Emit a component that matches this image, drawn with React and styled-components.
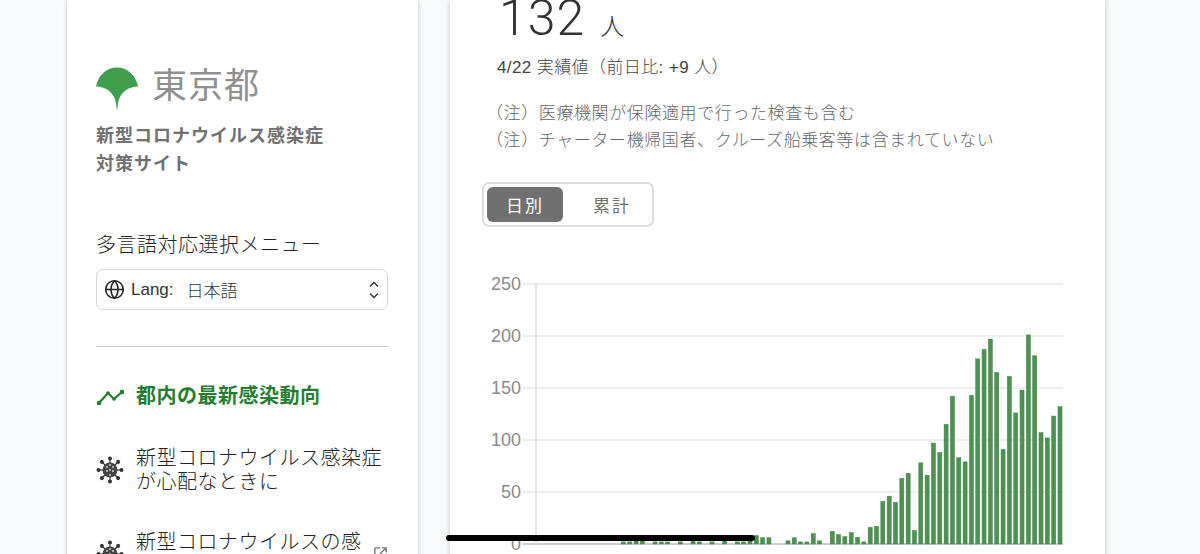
import React from 'react'
import styled, { createGlobalStyle } from 'styled-components'
import { Globe } from 'lucide-react'
import { MdOpenInNew } from 'react-icons/md'

// daily counts, newest first (last bar on the chart is index 0)
const DAILY = [
  132, 123, 102, 107, 181, 201, 148, 126, 161, 91, 165, 197, 187, 178, 143, 79, 83, 142, 115, 88, 97,
  66, 78, 13, 68, 63, 40, 46, 41, 17, 16, 2, 6.5, 11, 7, 9, 12, 0, 3, 10, 2, 2, 6, 3, 0, 0, 6, 6, 8,
  3, 2, 2, 0, 3, 0, 2, 0, 2, 3, 0, 2, 0, 2, 2, 2, 0, 3, 3, 2, 2,
]
const TICKS = [0, 50, 100, 150, 200, 250]
const yFor = v => 544 - v * 1.04

const Global = createGlobalStyle`
  html, body {
    margin: 0;
    padding: 0;
    background: #f8f9fa;
  }
  body {
    font-family: "Liberation Sans", "Noto Sans CJK JP", sans-serif;
  }
`

function App() {
  return (
    <Page>
      <Global />
      <Sidebar>
        <LogoRow>
          <svg width="44" height="44" viewBox="95 65 44 44">
            <path
              fill="#3f9e4b"
              d="M96 85.5C98 74 107 66.5 117 66.5S136 74 138 85.5C128 85.5 119.500 92 118 102L117.300 108.500H116.700L116 102C114.500 92 106 85.500 96 85.500Z"
            />
          </svg>
          <LogoText>東京都</LogoText>
        </LogoRow>
        <SiteTitle>
          新型コロナウイルス感染症
          <br />
          対策サイト
        </SiteTitle>
        <LangLabel>多言語対応選択メニュー</LangLabel>
        <LangSelect>
          <Globe size={21} strokeWidth={1.8} color="#222" />
          <LangPrefix>Lang:</LangPrefix>
          <LangValue>日本語</LangValue>
          <svg width="12" height="20" viewBox="0 0 12 20" fill="none" stroke="#333" strokeWidth="1.4">
            <path d="M2 6.500L6 2.500L10 6.500" />
            <path d="M2 13.500L6 17.500L10 13.500" />
          </svg>
        </LangSelect>
        <Divider />
        <NavList>
          <NavItem $active>
            <NavIcon>
              <TrendIcon />
            </NavIcon>
            <NavText $active>都内の最新感染動向</NavText>
          </NavItem>
          <NavItem>
            <NavIcon>
              <VirusIcon />
            </NavIcon>
            <NavText>
              新型コロナウイルス感染症
              <br />
              が心配なときに
            </NavText>
          </NavItem>
          <NavItem>
            <NavIcon>
              <VirusIcon />
            </NavIcon>
            <NavText>
              新型コロナウイルスの感
              <br />
              染症対策
            </NavText>
            <OutLink>
              <MdOpenInNew size={17} />
            </OutLink>
          </NavItem>
        </NavList>
      </Sidebar>
      <Main>
        <Count>
          132<Unit>人</Unit>
        </Count>
        <DateLine>4/22 実績値（前日比: +9 人）</DateLine>
        <Notes>
          <li>（注）医療機関が保険適用で行った検査も含む</li>
          <li>（注）チャーター機帰国者、クルーズ船乗客等は含まれていない</li>
        </Notes>
        <Toggle>
          <ToggleButton $active>日別</ToggleButton>
          <ToggleButton>累計</ToggleButton>
        </Toggle>
        <ChartFrame>
          <svg width="600" height="284" viewBox="480 270 600 284">
            {TICKS.map(t => (
              <g key={t}>
                <line x1="522" x2="1063" y1={yFor(t)} y2={yFor(t)} stroke={t === 0 ? '#bdbdbd' : '#e8e8e8'} strokeWidth="1.5" />
                <text x="521" y={yFor(t) + 6} textAnchor="end" fontSize="18" fill="#8a8a8a" fontFamily="Liberation Sans">
                  {t}
                </text>
              </g>
            ))}
            <line x1="536" x2="536" y1="284" y2="544" stroke="#dedede" strokeWidth="1.5" />
            {DAILY.map((v, i) => (
              <rect key={i} x={1060 - i * 6.327 - 2} y={yFor(v)} width="4" height={544 - yFor(v)} fill="#4a944f" stroke="#3a7f40" strokeWidth="0.5" />
            ))}
          </svg>
        </ChartFrame>
      </Main>
      <Scribble />
    </Page>
  )
}

function TrendIcon() {
  return (
    <svg width="28" height="20" viewBox="0 0 28 20" fill="#1f7f2e" stroke="#1f7f2e">
      <path d="M3 17L12 7L18 13L26 6" fill="none" strokeWidth="2.200" />
      <circle cx="3" cy="17" r="2.300" stroke="none" />
      <circle cx="12" cy="7" r="1.800" stroke="none" />
      <circle cx="18" cy="13" r="1.800" stroke="none" />
      <circle cx="26" cy="6" r="2.300" stroke="none" />
    </svg>
  )
}

function VirusIcon() {
  const spokes = [0, 45, 90, 135, 180, 225, 270, 315]
  const holes = [[11, 11], [14, 9], [17, 11], [11, 15], [14, 14], [17, 15], [14, 19]]
  return (
    <svg width="28" height="28" viewBox="0 0 28 28">
      {spokes.map(a => (
        <g key={a} transform={`rotate(${a} 14 14)`}>
          <line x1="14" y1="8" x2="14" y2="3" stroke="#333" strokeWidth="1.200" />
          <circle cx="14" cy="2.500" r="2" fill="#333" />
        </g>
      ))}
      <circle cx="14" cy="14" r="7.500" fill="#444" />
      {holes.map(([x, y]) => (
        <circle key={`${x}-${y}`} cx={x} cy={y} r="0.900" fill="#ddd" />
      ))}
    </svg>
  )
}

export default App

const Page = styled.div`
  position: relative;
  width: 1200px;
  height: 554px;
  overflow: hidden;
  display: flex;
  align-items: flex-start;
  gap: 32px;
  padding-left: 67px;
  box-sizing: border-box;
`

const Sidebar = styled.aside`
  width: 351px;
  height: 700px;
  flex: none;
  box-sizing: border-box;
  background: #fff;
  padding: 66px 30px 0 29px;
  box-shadow: 0 0 4px rgba(0, 0, 0, 0.22);
`

const LogoRow = styled.div`
  display: flex;
  align-items: center;
  height: 44px;
  gap: 13px;
  margin-left: -1px;
`

const LogoText = styled.div`
  font-size: 35px;
  font-weight: 400;
  line-height: 40px;
  letter-spacing: 1px;
  color: #909090;
  margin-top: -4px;
`

const SiteTitle = styled.h1`
  margin: 12px 0 0;
  font-size: 18px;
  font-weight: 700;
  line-height: 28px;
  letter-spacing: 1px;
  color: #707070;
`

const LangLabel = styled.div`
  margin-top: 53px;
  font-size: 20px;
  font-weight: 300;
  line-height: 28px;
  letter-spacing: 0.5px;
  color: #222;
`

const LangSelect = styled.div`
  margin-top: 10px;
  height: 41px;
  box-sizing: border-box;
  display: flex;
  align-items: center;
  padding: 0 7px;
  border: 1.5px solid #d8d8d8;
  border-radius: 7px;
  color: #333;
`

const LangPrefix = styled.span`
  margin-left: 6px;
  font-size: 17px;
  font-weight: 300;
`

const LangValue = styled.span`
  margin-left: 13px;
  flex: 1;
  font-size: 17px;
  font-weight: 300;
`

const Divider = styled.hr`
  margin: 36px 0 0;
  border: 0;
  border-top: 1px solid #cfcfcf;
`

const NavList = styled.nav`
  display: flex;
  flex-direction: column;
  gap: 36px;
  margin-top: 35px;
`

const NavItem = styled.div`
  position: relative;
  display: flex;
  align-items: center;
  gap: 12px;
  min-height: 24px;
`

const NavIcon = styled.span`
  width: 28px;
  height: 28px;
  flex: none;
  display: flex;
  align-items: center;
  justify-content: center;
`

const NavText = styled.span`
  font-size: 20px;
  line-height: 24px;
  letter-spacing: 0.5px;
  font-weight: ${p => (p.$active ? 700 : 300)};
  color: ${p => (p.$active ? '#1f7f2e' : '#222')};
`

const OutLink = styled.span`
  position: absolute;
  right: -1px;
  top: 15px;
  color: #777;
`

const Main = styled.main`
  width: 655px;
  height: 700px;
  flex: none;
  box-sizing: border-box;
  background: #fff;
  padding-left: 30px;
  box-shadow: 0 0 6px rgba(0, 0, 0, 0.2);
`

const Count = styled.div`
  margin: -10px 0 0 19px;
  font-family: Roboto, "Noto Sans CJK JP", sans-serif;
  font-size: 50px;
  font-weight: 300;
  line-height: 56px;
  letter-spacing: 1px;
  color: #333;
`

const Unit = styled.span`
  margin-left: 15px;
  font-size: 24px;
`

const DateLine = styled.div`
  margin: -1px 0 0 17px;
  font-size: 17px;
  font-weight: 300;
  line-height: 28px;
  letter-spacing: 0.4px;
  color: #444;
`

const Notes = styled.ul`
  list-style: none;
  margin: 18px 0 0 6px;
  padding: 0;
  font-size: 17px;
  font-weight: 300;
  line-height: 27px;
  letter-spacing: 0.6px;
  color: #666;
`

const Toggle = styled.div`
  display: inline-flex;
  margin: 28px 0 0 2px;
  padding: 3px;
  border: 2px solid #dcdcdc;
  border-radius: 7px;
`

const ToggleButton = styled.div`
  width: ${p => (p.$active ? 76 : 86)}px;
  height: 35px;
  box-sizing: border-box;
  display: flex;
  align-items: center;
  justify-content: center;
  padding-left: ${p => (p.$active ? 0 : 12)}px;
  border-radius: 6px;
  font-size: 17px;
  letter-spacing: 2px;
  background: ${p => (p.$active ? '#707070' : 'transparent')};
  color: ${p => (p.$active ? '#fff' : '#707070')};
`

const ChartFrame = styled.div`
  margin-top: 43px;
  height: 284px;
  width: 600px;
`

const Scribble = styled.div`
  position: absolute;
  left: 446px;
  top: 535px;
  width: 309px;
  height: 6px;
  border-radius: 3px;
  background: #000;
`
